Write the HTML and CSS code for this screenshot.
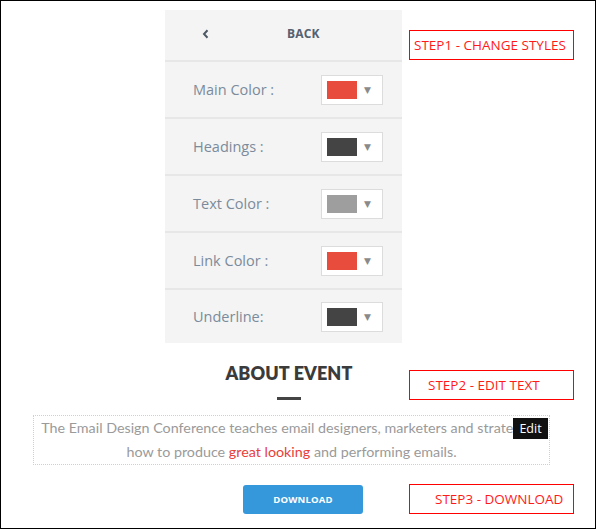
FILE: index.html
```html
<!DOCTYPE html>
<html>
<head>
<meta charset="utf-8">
<link rel="stylesheet" href="styles.css">
</head>
<body>
<div class="frame">
  <div class="panel">
    <div class="back-row">
      <svg class="chev" width="7" height="10" viewBox="0 0 7 10"><path d="M5.5 1.2 L2 5 L5.5 8.8" fill="none" stroke="#4d5866" stroke-width="2"/></svg>
      <span class="back">BACK</span>
    </div>
    <div class="row"><span class="label">Main Color :</span><span class="picker"><span class="sw red"></span><span class="arr">▼</span></span></div>
    <div class="row"><span class="label">Headings :</span><span class="picker"><span class="sw dark"></span><span class="arr">▼</span></span></div>
    <div class="row"><span class="label">Text Color :</span><span class="picker"><span class="sw gray"></span><span class="arr">▼</span></span></div>
    <div class="row"><span class="label">Link Color :</span><span class="picker"><span class="sw red"></span><span class="arr">▼</span></span></div>
    <div class="row last"><span class="label">Underline:</span><span class="picker"><span class="sw dark"></span><span class="arr">▼</span></span></div>
  </div>

  <div class="about">
    <h2 class="title">ABOUT EVENT</h2>
    <div class="bar"></div>
    <p class="text">The Email Design Conference teaches email designers, marketers and strategists how to produce <a class="link">great looking</a> and performing emails.</p>
    <span class="edit">Edit</span>
  </div>

  <div class="dl-row">
    <span class="btn">DOWNLOAD</span>
  </div>

  <div class="step step1">STEP1 - CHANGE STYLES</div>
  <div class="step step2">STEP2 - EDIT TEXT</div>
  <div class="step step3">STEP3 - DOWNLOAD</div>
</div>
</body>
</html>
```

FILE: styles.css
```css
* { box-sizing: border-box; }
html, body { margin: 0; padding: 0; background: #fff; }
.frame {
  position: relative;
  width: 596px;
  height: 529px;
  border: 1px solid #000;
  overflow: hidden;
}
.panel {
  margin: 9px 0 0 164px;
  width: 237px;
  background: #f4f4f4;
  font-family: "Open Sans", sans-serif;
}
.back-row {
  height: 52px;
  border-bottom: 2px solid #e7e7e7;
  display: flex;
  align-items: center;
  padding-left: 37px;
  padding-bottom: 4px;
}
.chev { display: block; margin-top: 1px; }
.back {
  margin-left: 78px;
  font-family: "Open Sans", sans-serif;
  font-weight: 700;
  font-size: 12px;
  color: #556070;
  letter-spacing: 0.2px;
}
.row {
  height: 57px;
  border-bottom: 2px solid #e7e7e7;
  display: flex;
  align-items: center;
  justify-content: space-between;
  padding: 0 19px 0 28px;
}
.row.last { height: 53px; border-bottom: none; }
.label {
  font-size: 14.5px;
  color: #7b8b9b;
  font-weight: 400;
  margin-top: -1px;
}
.picker {
  width: 62px;
  height: 30px;
  background: #fff;
  border: 1px solid #dcdcdc;
  display: flex;
  align-items: center;
  padding-left: 5px;
}
.sw { width: 30px; height: 18px; display: block; }
.sw.red { background: #e84c3d; }
.sw.dark { background: #444; }
.sw.gray { background: #9e9e9e; }
.arr {
  margin-left: 7px;
  font-size: 9px;
  color: #8a8a8a;
  font-family: "DejaVu Sans", sans-serif;
}
.about {
  position: relative;
  display: flex;
  flex-direction: column;
  align-items: center;
  margin-top: 19px;
}
.title {
  margin: 0 18px 0 0;
  font-family: "Lato", sans-serif;
  font-weight: 800;
  font-size: 18px;
  line-height: 22px;
  color: #3b3b3b;
  letter-spacing: 0.1px;
}
.bar {
  width: 24px;
  height: 3px;
  background: #444;
  margin: 13px 18px 0 0;
}
.text {
  margin: 15px 0 0 32px;
  align-self: flex-start;
  width: 517px;
  height: 50px;
  border: 1px dotted #cfcfcf;
  text-align: center;
  font-family: "Lato", sans-serif;
  font-size: 14.3px;
  line-height: 24px;
  color: #9a9a9a;
  overflow: hidden;
}
.link { color: #e8403a; }
.edit {
  position: absolute;
  left: 512px;
  top: 56px;
  width: 35px;
  height: 21px;
  background: #111;
  color: #fff;
  font-family: "Open Sans", sans-serif;
  font-size: 12.5px;
  line-height: 21px;
  text-align: center;
}
.dl-row {
  margin-top: 20px;
  padding-left: 242px;
}
.btn {
  display: flex;
  align-items: center;
  justify-content: center;
  width: 120px;
  height: 29px;
  background: #3498db;
  border-radius: 3px;
  color: #fff;
  font-family: "Open Sans", sans-serif;
  font-weight: 700;
  font-size: 9.5px;
  letter-spacing: 0.2px;
}
.step {
  position: absolute;
  left: 408px;
  width: 165px;
  height: 30px;
  border: 1px solid #ff0000;
  color: #ff1a1a;
  font-family: "Open Sans", sans-serif;
  font-size: 13.5px;
  line-height: 28px;
  white-space: nowrap;
}
.step1 { top: 29px; padding-left: 4px; }
.step2 { top: 369px; padding-left: 18px; }
.step3 { top: 483px; padding-left: 25px; }
```
